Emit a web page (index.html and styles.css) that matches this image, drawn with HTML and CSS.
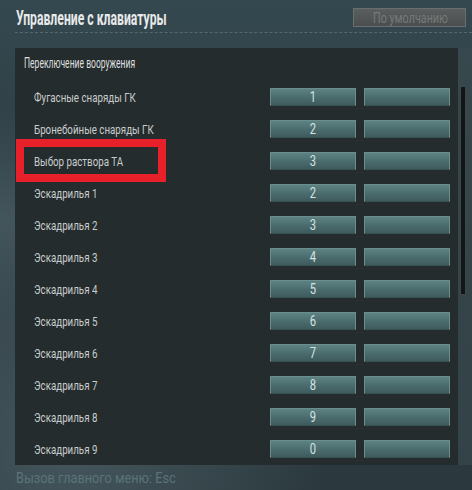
FILE: index.html
```html
<!DOCTYPE html>
<html lang="ru">

<head>
    <meta charset="UTF-8">
    <meta name="viewport" content="width=device-width, initial-scale=1.0">
    <title>Управление с клавиатуры</title>
    <link rel="stylesheet" href="styles.css">
</head>

<body>
<div class="screen">
    <div class="header">
        <h1 class="title"><span class="narrow">Управление с клавиатуры</span></h1>
        <button class="default-btn" type="button"><span class="narrow">По умолчанию</span></button>
    </div>

    <div class="content">
        <div class="panel">
            <div class="section-title"><span class="narrow">Переключение вооружения</span></div>

            <div class="row">
                <span class="label narrow">Фугасные снаряды ГК</span>
                <button class="key" type="button"><span class="narrow">1</span></button>
                <button class="key" type="button"></button>
            </div>
            <div class="row">
                <span class="label narrow">Бронебойные снаряды ГК</span>
                <button class="key" type="button"><span class="narrow">2</span></button>
                <button class="key" type="button"></button>
            </div>
            <div class="row marked">
                <span class="label narrow">Выбор раствора ТА</span>
                <button class="key" type="button"><span class="narrow">3</span></button>
                <button class="key" type="button"></button>
            </div>
            <div class="row">
                <span class="label narrow">Эскадрилья 1</span>
                <button class="key" type="button"><span class="narrow">2</span></button>
                <button class="key" type="button"></button>
            </div>
            <div class="row">
                <span class="label narrow">Эскадрилья 2</span>
                <button class="key" type="button"><span class="narrow">3</span></button>
                <button class="key" type="button"></button>
            </div>
            <div class="row">
                <span class="label narrow">Эскадрилья 3</span>
                <button class="key" type="button"><span class="narrow">4</span></button>
                <button class="key" type="button"></button>
            </div>
            <div class="row">
                <span class="label narrow">Эскадрилья 4</span>
                <button class="key" type="button"><span class="narrow">5</span></button>
                <button class="key" type="button"></button>
            </div>
            <div class="row">
                <span class="label narrow">Эскадрилья 5</span>
                <button class="key" type="button"><span class="narrow">6</span></button>
                <button class="key" type="button"></button>
            </div>
            <div class="row">
                <span class="label narrow">Эскадрилья 6</span>
                <button class="key" type="button"><span class="narrow">7</span></button>
                <button class="key" type="button"></button>
            </div>
            <div class="row">
                <span class="label narrow">Эскадрилья 7</span>
                <button class="key" type="button"><span class="narrow">8</span></button>
                <button class="key" type="button"></button>
            </div>
            <div class="row">
                <span class="label narrow">Эскадрилья 8</span>
                <button class="key" type="button"><span class="narrow">9</span></button>
                <button class="key" type="button"></button>
            </div>
            <div class="row">
                <span class="label narrow">Эскадрилья 9</span>
                <button class="key" type="button"><span class="narrow">0</span></button>
                <button class="key" type="button"></button>
            </div>
        </div>
        <div class="scroll-track">
            <div class="scroll-thumb"></div>
        </div>
    </div>

    <div class="footer"><span class="narrow">Вызов главного меню: Esc</span></div>
</div>
</body>

</html>
```

FILE: styles.css
```css
body {
    margin: 0;
    font-family: Roboto, "Liberation Sans", sans-serif;
    background: #2c3b41;
}

/* no condensed face installed, so squeeze the regular one */
.narrow {
    display: inline-block;
    white-space: nowrap;
    transform: scaleX(0.85);
    transform-origin: left center;
}

.screen {
    width: 472px;
    height: 490px;
    overflow: hidden;
    background: radial-gradient(ellipse at 0% 45%, #43565c 0%, rgba(67, 86, 92, 0) 30%),
                radial-gradient(ellipse at 15% 90%, #44565c 0%, rgba(68, 86, 92, 0) 45%),
                linear-gradient(180deg, #34484f 0%, #2e3e44 40%, #2b393e 100%);
}

.header {
    display: flex;
    align-items: center;
    justify-content: space-between;
    height: 32px;
    margin-left: 15px;
    padding-left: 1px;
    padding-right: 6px;
    border-bottom: 1px dashed #56686d;
}

.title {
    margin: 0;
    padding-top: 4px;
    font-size: 20px;
    font-weight: bold;
    color: #e8eaea;
}

.title .narrow {
    transform: scaleX(0.61);
}

.default-btn {
    width: 113px;
    height: 19px;
    margin-top: 3px;
    padding: 0 0 0 19px;
    text-align: left;
    border: 1px solid #6a6e6e;
    background: linear-gradient(180deg, #5a5e5e 0%, #4a4e4e 100%);
    color: #767a7a;
    font-family: inherit;
    font-size: 14px;
}

.default-btn .narrow {
    transform: scaleX(0.77);
}

.content {
    display: flex;
    margin-top: 15px;
    margin-left: 15px;
}

.panel {
    width: 443px;
    height: 417px;
    background: #252c2e;
}

.section-title {
    padding-left: 9px;
    line-height: 30px;
    padding-bottom: 3px;
    font-size: 14px;
    color: #dcdfdf;
}

.section-title .narrow {
    transform: scaleX(0.61);
}

.row {
    position: relative;
    display: grid;
    grid-template-columns: 1fr 86px 86px;
    column-gap: 8px;
    align-items: center;
    height: 32px;
    padding-left: 19px;
    padding-right: 8px;
}

.label {
    font-size: 13px;
    color: #c9cdcd;
}

.row .label {
    transform: scaleX(0.75);
}

.key {
    height: 18px;
    padding: 0;
    border: 1px solid #6d8d8d;
    border-bottom-color: #3a5152;
    background: linear-gradient(180deg, #5d8282 0%, #4a6b6c 55%, #3e5b5c 100%);
    color: #d6e2e2;
    font-family: inherit;
    font-size: 14px;
    line-height: 16px;
}

.key .narrow {
    transform: scaleX(0.8);
    transform-origin: center;
}

/* red frame drawn over the third row */
.marked::before {
    content: "";
    position: absolute;
    left: 1px;
    top: -6px;
    width: 150px;
    height: 43px;
    box-sizing: border-box;
    border: 8px solid #e8202a;
}

.scroll-track {
    width: 14px;
    height: 417px;
    background: rgba(60, 76, 80, 0.5);
}

.scroll-thumb {
    width: 4px;
    height: 207px;
    margin-top: 38px;
    margin-left: 2px;
    background: #111616;
    border: 1px solid #3e4646;
}

.footer {
    margin-top: 4px;
    padding-left: 16px;
    font-size: 15px;
    color: #5b737a;
}
```
